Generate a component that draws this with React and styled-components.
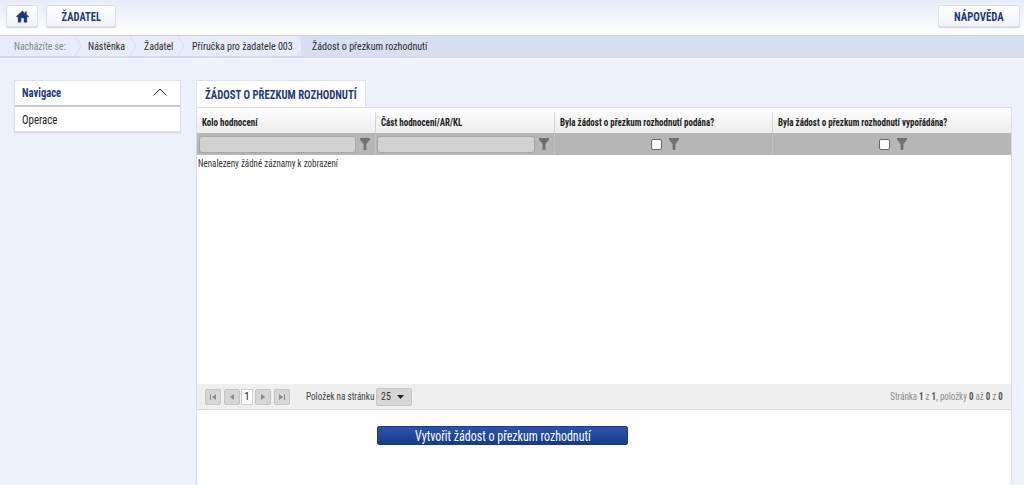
import React from "react";
import styled, { createGlobalStyle } from "styled-components";

const Global = createGlobalStyle`
  html, body { margin: 0; padding: 0; height: 485px; overflow: hidden; background: #edf1fb; }
  body { font-family: Roboto, "Liberation Sans", sans-serif; font-stretch: 75%; color: #222; }
  * { box-sizing: border-box; }
`;

/* The reference face is narrower than Roboto's narrowest width: the rest is a horizontal squeeze */
const Squeeze = styled.span`
  display: inline-block;
  white-space: nowrap;
  transform: scaleX(${(p) => p.$x || 0.855});
  transform-origin: ${(p) => p.$origin || "left"} center;
`;

const Page = styled.div`
  width: 1024px;
  height: 485px;
  overflow: hidden;
  display: flex;
  flex-direction: column;
`;
const TopBar = styled.header`
  height: 35px;
  flex: none;
  padding: 5px 4px 0 6px;
  display: flex;
  justify-content: space-between;
  align-items: flex-start;
  background: linear-gradient(#e6ebf8, #ffffff);
`;
const TopGroup = styled.div`
  display: flex;
  gap: 8px;
`;
const TopButton = styled.button`
  font-family: Roboto, "Liberation Sans", sans-serif;
  font-stretch: 75%;
  height: 22px;
  width: ${(p) => p.$w}px;
  padding: 0;
  display: flex;
  align-items: center;
  justify-content: center;
  background: linear-gradient(#ffffff, #f1f3f8);
  border: 1px solid #dcdfe6;
  border-radius: 2px;
  box-shadow: 0 1px 1px #cfd4df;
  color: #1f3a80;
  font-size: 13px;
  font-weight: 700;
`;
const Crumbs = styled.nav`
  height: 23px;
  flex: none;
  display: flex;
  align-items: center;
  font-size: 11.5px;
  background: #e7ecf9;
  border-top: 1px solid #c8d0e2;
  border-bottom: 2px solid #d3d9e8;
`;
const Crumb = styled.div`
  height: 100%;
  display: flex;
  align-items: center;
  white-space: nowrap;
  width: ${(p) => (p.$w ? `${p.$w}px` : "auto")};
  flex: ${(p) => (p.$last ? 1 : "none")};
  padding-left: ${(p) => p.$pad}px;
  color: ${(p) => p.$color || "#2a2a2a"};
  background: ${(p) => (p.$last ? "#d7dff2" : "transparent")};
  position: relative;
`;
const Chevron = styled.svg`
  position: absolute;
  right: -4px;
  top: 0;
  width: 8px;
  height: 20px;
  z-index: 1;
`;
const Content = styled.main`
  flex: 1;
  padding: 22px 12px 0 14px;
  display: flex;
  gap: 15px;
  min-height: 0;
`;
const Side = styled.aside`
  width: 167px;
  flex: none;
`;
const NavCard = styled.div`
  background: #fff;
  border: 1px solid #dde1ea;
  box-shadow: 0 1px 1px #d8dce6;
`;
const NavHead = styled.div`
  height: 26px;
  padding: 0 13px 2px 7px;
  display: flex;
  align-items: center;
  justify-content: space-between;
  border-bottom: 2px solid #c4c8d0;
  color: #1f3a80;
  font-weight: 700;
  font-size: 12.5px;
`;
const NavItem = styled.div`
  height: 24px;
  padding: 0 7px;
  display: flex;
  align-items: center;
  font-size: 12.5px;
  color: #222;
`;
const Column = styled.section`
  flex: 1;
  display: flex;
  flex-direction: column;
  min-width: 0;
`;
const Tab = styled.div`
  align-self: flex-start;
  width: 170px;
  height: 27px;
  padding: 1px 0 0 8px;
  display: flex;
  align-items: center;
  background: #fff;
  border: 1px solid #dfe3ec;
  border-bottom: none;
  color: #1f3a80;
  font-size: 13px;
  font-weight: 700;
`;
const Panel = styled.div`
  flex: 1;
  display: flex;
  flex-direction: column;
  background: #fff;
  border: 1px solid #d8dce6;
  border-bottom: none;
  border-radius: 2px 2px 0 0;
  padding-top: 4px;
`;
const Grid = styled.div`
  display: grid;
  grid-template-columns: 178px 179px 218px 1fr;
`;
const HeadCell = styled.div`
  height: 21px;
  padding-left: 5px;
  display: flex;
  align-items: center;
  overflow: hidden;
  font-size: 10.5px;
  font-weight: 700;
  color: #222;
  background: linear-gradient(#fbfbfb, #ececec);
  border-left: ${(p) => (p.$first ? "none" : "1px solid #d4d4d4")};
`;
const FilterCell = styled.div`
  height: 22px;
  padding: 2px 5px 2px ${(p) => (p.$center ? 7 : p.$first ? 2 : 1)}px;
  display: flex;
  align-items: center;
  justify-content: ${(p) => (p.$center ? "center" : "flex-start")};
  gap: ${(p) => (p.$center ? 7 : 4)}px;
  background: #b6b6b6;
  border-left: ${(p) => (p.$first ? "none" : "1px solid #c2c2c2")};
`;
const FilterInput = styled.div`
  flex: 1;
  height: 17px;
  background: #d2d2d2;
  border: 1px solid #a8a8a8;
  border-radius: 3px;
`;
const FilterBox = styled.input.attrs({ type: "checkbox" })`
  width: 11px;
  height: 11px;
  margin: 0;
  padding: 0;
  appearance: none;
  background: #fff;
  border: 1px solid #666;
  border-radius: 2px;
`;
const Empty = styled.div`
  flex: 1;
  padding: 2px 1px;
  font-size: 10.5px;
  color: #333;
  line-height: 14px;
`;
const Pager = styled.div`
  height: 26px;
  flex: none;
  padding: 0 8px;
  display: flex;
  align-items: center;
  background: #efefef;
  border-bottom: 1px solid #dcdcdc;
  font-size: 11px;
  color: #444;
`;
const PageBtn = styled.div`
  width: 16px;
  height: 16px;
  margin-right: ${(p) => p.$mr || 0}px;
  display: flex;
  align-items: center;
  justify-content: center;
  background: #d6d6d6;
  border: 1px solid #c4c4c4;
  border-radius: 2px;
`;
const PageNum = styled.div`
  width: 12px;
  height: 16px;
  display: flex;
  align-items: center;
  justify-content: center;
  background: #fff;
  border: 1px solid #d0d0d0;
  font-size: 11px;
  color: #222;
  margin: 0 2px 0 1px;
`;
const PageLabel = styled.span`
  width: 70px;
  margin-left: 16px;
`;
const PageSize = styled.div`
  width: 36px;
  height: 18px;
  padding: 0 7px 0 4px;
  display: flex;
  align-items: center;
  justify-content: space-between;
  background: #d6d6d6;
  border: 1px solid #c8c8c8;
  border-radius: 2px;
  color: #333;
`;
const PageInfo = styled.div`
  margin-left: auto;
  color: #8c8c8c;
  b { color: #555; }
`;
const Actions = styled.div`
  padding: 16px 0 40px 180px;
`;
const Primary = styled.button`
  font-family: Roboto, "Liberation Sans", sans-serif;
  font-stretch: 75%;
  width: 251px;
  height: 19px;
  padding: 0;
  display: block;
  background: linear-gradient(#2a55ad, #173a8c);
  border: 1px solid #1c3a80;
  border-radius: 2px;
  color: #fff;
  font-size: 14px;
  font-weight: 400;
`;

const Funnel = ({ c = "#717171" }) => (
  <svg width="10" height="12" viewBox="0 0 10 12" style={{ flex: "none" }}>
    <path d="M0 0h10v1.5L6.4 6V12H3.6V6L0 1.5z" fill={c} />
  </svg>
);
const Glyph = ({ d }) => (
  <svg width="8" height="8" viewBox="0 0 8 8">
    <path d={d} fill="#8a8a8a" />
  </svg>
);
const ChevronRight = () => (
  <Chevron viewBox="0 0 8 20">
    <path d="M1 0l6 10-6 10" fill="none" stroke="#d6dcec" strokeWidth="1" />
  </Chevron>
);

export default function App() {
  return (
    <Page>
      <Global />
      <TopBar>
        <TopGroup>
          <TopButton $w={32} aria-label="Domů">
            <svg width="13" height="13" viewBox="0 0 14 13">
              <path d="M7 0L0 6.5l1 1 1-.9V13h3.6V8.5h2.8V13H12V6.6l1 .9 1-1-2.5-2.3V1h-2v2.4z" fill="#1f3a80" />
            </svg>
          </TopButton>
          <TopButton $w={70}><Squeeze $x={0.81} $origin="center">ŽADATEL</Squeeze></TopButton>
        </TopGroup>
        <TopButton $w={82}><Squeeze $x={0.83} $origin="center">NÁPOVĚDA</Squeeze></TopButton>
      </TopBar>
      <Crumbs>
        <Crumb $w={78} $pad={14} $color="#7f8794"><Squeeze $x={0.84}>Nacházíte se:</Squeeze><ChevronRight /></Crumb>
        <Crumb $w={55} $pad={10}><Squeeze $x={0.86}>Nástěnka</Squeeze><ChevronRight /></Crumb>
        <Crumb $w={48} $pad={11}><Squeeze $x={0.86}>Žadatel</Squeeze><ChevronRight /></Crumb>
        <Crumb $w={120} $pad={11}><Squeeze $x={0.868}>Příručka pro žadatele 003</Squeeze><ChevronRight /></Crumb>
        <Crumb $last $pad={11}><Squeeze $x={0.87}>Žádost o přezkum rozhodnutí</Squeeze></Crumb>
      </Crumbs>
      <Content>
        <Side>
          <NavCard>
            <NavHead>
              <Squeeze $x={0.85}>Navigace</Squeeze>
              <svg width="14" height="8" viewBox="0 0 14 8">
                <path d="M0.5 7.5L7 1l6.5 6.5" fill="none" stroke="#222" strokeWidth="1" />
              </svg>
            </NavHead>
            <NavItem><Squeeze $x={0.87}>Operace</Squeeze></NavItem>
          </NavCard>
        </Side>
        <Column>
          <Tab><Squeeze $x={0.826}>ŽÁDOST O PŘEZKUM ROZHODNUTÍ</Squeeze></Tab>
          <Panel>
            <Grid>
              <HeadCell $first><Squeeze>Kolo hodnocení</Squeeze></HeadCell>
              <HeadCell><Squeeze>Část hodnocení/AR/KL</Squeeze></HeadCell>
              <HeadCell><Squeeze>Byla žádost o přezkum rozhodnutí podána?</Squeeze></HeadCell>
              <HeadCell><Squeeze>Byla žádost o přezkum rozhodnutí vypořádána?</Squeeze></HeadCell>
              <FilterCell $first><FilterInput /><Funnel /></FilterCell>
              <FilterCell><FilterInput /><Funnel /></FilterCell>
              <FilterCell $center><FilterBox /><Funnel /></FilterCell>
              <FilterCell $center><FilterBox /><Funnel /></FilterCell>
            </Grid>
            <Empty><Squeeze>Nenalezeny žádné záznamy k zobrazení</Squeeze></Empty>
            <Pager>
              <PageBtn $mr={3}><Glyph d="M1 1h1v6H1zM7 1v6L3 4z" /></PageBtn>
              <PageBtn><Glyph d="M6 1v6L2 4z" /></PageBtn>
              <PageNum>1</PageNum>
              <PageBtn $mr={3}><Glyph d="M2 1v6l4-3z" /></PageBtn>
              <PageBtn><Glyph d="M1 1v6l4-3zM6 1h1v6H6z" /></PageBtn>
              <PageLabel><Squeeze $x={0.83}>Položek na stránku</Squeeze></PageLabel>
              <PageSize>
                <Squeeze $x={0.9}>25</Squeeze>
                <svg width="7" height="4" viewBox="0 0 7 4"><path d="M0 0h7L3.5 4z" fill="#222" /></svg>
              </PageSize>
              <PageInfo>
                <Squeeze $x={0.81} $origin="right">Stránka <b>1</b> z <b>1</b>, položky <b>0</b> až <b>0</b> z <b>0</b></Squeeze>
              </PageInfo>
            </Pager>
            <Actions>
              <Primary><Squeeze $x={0.854} $origin="center">Vytvořit žádost o přezkum rozhodnutí</Squeeze></Primary>
            </Actions>
          </Panel>
        </Column>
      </Content>
    </Page>
  );
}
